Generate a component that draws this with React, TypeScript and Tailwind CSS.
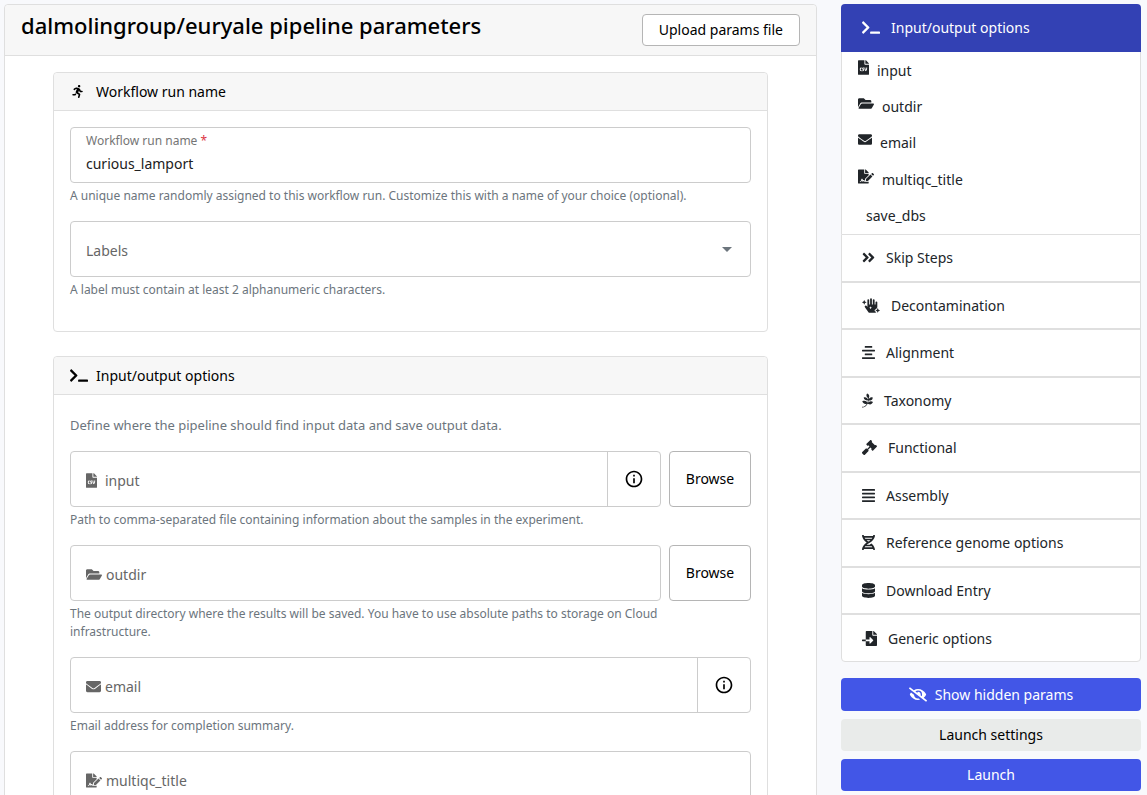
import type { ReactNode } from 'react'
import type { IconType } from 'react-icons'
import {
  FaAlignCenter,
  FaAlignJustify,
  FaAngleDoubleRight,
  FaDatabase,
  FaDna,
  FaEnvelope,
  FaEyeSlash,
  FaFileCsv,
  FaFileImport,
  FaFileSignature,
  FaFolderOpen,
  FaGavel,
  FaHandSparkles,
  FaPagelines,
  FaRunning,
  FaTerminal,
} from 'react-icons/fa'
import { MdArrowDropDown, MdInfoOutline } from 'react-icons/md'

type Item = { label: string; icon?: IconType; size?: string }

const params: Item[] = [
  { label: 'input', icon: FaFileCsv, size: 'w-[11px]' },
  { label: 'outdir', icon: FaFolderOpen, size: 'w-4' },
  { label: 'email', icon: FaEnvelope, size: 'w-[14px]' },
  { label: 'multiqc_title', icon: FaFileSignature, size: 'w-4' },
  { label: 'save_dbs' },
]

const sections: Item[] = [
  { label: 'Skip Steps', icon: FaAngleDoubleRight, size: 'w-[13px]' },
  { label: 'Decontamination', icon: FaHandSparkles, size: 'w-[18px]' },
  { label: 'Alignment', icon: FaAlignCenter, size: 'w-[13px]' },
  { label: 'Taxonomy', icon: FaPagelines, size: 'w-[11px]' },
  { label: 'Functional', icon: FaGavel, size: 'w-[15px]' },
  { label: 'Assembly', icon: FaAlignJustify, size: 'w-[13px]' },
  { label: 'Reference genome options', icon: FaDna, size: 'w-[13px]' },
  { label: 'Download Entry', icon: FaDatabase, size: 'w-[13px]' },
  { label: 'Generic options', icon: FaFileImport, size: 'w-[15px]' },
]

function Glyph({ icon: Icon, size = 'w-4' }: { icon: IconType; size?: string }) {
  return <Icon className={`h-[15px] shrink-0 ${size}`} aria-hidden="true" />
}

function Card({ title, icon, children }: { title: string; icon: ReactNode; children: ReactNode }) {
  return (
    <section className="rounded border border-[#dfdfdf] bg-white">
      <h2 className="flex h-[38px] items-center gap-2 rounded-t border-b border-[#dfdfdf] bg-[#f7f7f7] px-4 text-[14px] font-normal text-black">
        <span className="flex w-[18px]">{icon}</span>
        {title}
      </h2>
      {children}
    </section>
  )
}

function Hint({ id, children }: { id: string; children: ReactNode }) {
  return (
    <p id={id} className="mt-1 text-[12px] leading-[18px] text-[#6c757d]">
      {children}
    </p>
  )
}

type FieldProps = { id: string; icon: IconType; size: string; hint?: string; info?: boolean; browse?: boolean }

function Field({ id, icon, size, hint, info, browse }: FieldProps) {
  return (
    <div className="flex items-start gap-2">
      <div className="min-w-0 flex-1">
        <div className="flex h-14 rounded border border-[#cccccc]">
          <div className="flex min-w-0 flex-1 items-center pt-0.5 pl-[15px]">
            <label htmlFor={id} className="flex items-center gap-1 text-[14px] text-[#666666]">
              <Glyph icon={icon} size={size} />
              {id}
            </label>
            <input id={id} type="text" aria-describedby={hint ? `${id}-hint` : undefined} className="h-8 min-w-0 flex-1 bg-transparent px-2 text-[14px] outline-none" />
          </div>
          {info && (
            <button type="button" aria-label={`About ${id}`} className="flex w-[53px] items-center justify-center border-l border-[#cccccc] text-black">
              <MdInfoOutline className="size-5" />
            </button>
          )}
        </div>
        {hint && <Hint id={`${id}-hint`}>{hint}</Hint>}
      </div>
      {browse && (
        <button type="button" className="h-14 w-[82px] rounded border border-[#b5b5b5] bg-white pb-0.5 text-[14px] text-black">
          Browse
        </button>
      )}
    </div>
  )
}

export default function App() {
  return (
    <div className="flex h-screen items-start gap-6 overflow-hidden bg-[#f8f9fc] pt-1 pr-1.5 pl-1 font-['Noto_Sans',sans-serif]">
      <main className="min-w-0 flex-1 rounded border border-[#dfdfdf] bg-white">
        <header className="flex items-start justify-between rounded-t border-b border-[#dfdfdf] bg-[#f7f7f7] px-4 py-[9px]">
          <h1 className="text-[22px] leading-[22px] font-medium text-black">dalmolingroup/euryale pipeline parameters</h1>
          <button type="button" className="h-8 rounded border border-[#b5b5b5] bg-white px-4 pb-0.5 text-[14px] text-black">
            Upload params file
          </button>
        </header>

        <div className="flex flex-col gap-6 px-12 py-4">
          <Card title="Workflow run name" icon={<FaRunning className="ml-0.5 h-[13px] w-[11px]" aria-hidden="true" />}>
            <div className="flex flex-col gap-4 px-4 pt-4 pb-8">
              <div>
                <div className="flex h-14 flex-col rounded border border-[#cccccc] px-[15px] pt-1">
                  <label htmlFor="run-name" className="text-[12px] leading-[18px] text-[#757575]">
                    Workflow run name <span className="text-[#dc3545]">*</span>
                  </label>
                  <input id="run-name" type="text" defaultValue="curious_lamport" required aria-describedby="run-name-hint" className="h-[26px] bg-transparent text-[14px] text-[#212121] outline-none" />
                </div>
                <Hint id="run-name-hint">
                  A unique name randomly assigned to this workflow run. Customize this with a name of your choice (optional).
                </Hint>
              </div>
              <div>
                <div className="flex h-14 items-center rounded border border-[#cccccc] pr-[11px] pl-[15px]">
                  <label htmlFor="labels" className="pt-0.5 text-[14px] text-[#666666]">
                    Labels
                  </label>
                  <select id="labels" aria-describedby="labels-hint" className="h-8 min-w-0 flex-1 appearance-none bg-transparent outline-none" />
                  <MdArrowDropDown className="size-6 text-[#6c757d]" aria-hidden="true" />
                </div>
                <Hint id="labels-hint">A label must contain at least 2 alphanumeric characters.</Hint>
              </div>
            </div>
          </Card>

          <Card title="Input/output options" icon={<Glyph icon={FaTerminal} size="w-[18px]" />}>
            <div className="px-4 pt-5 pb-4">
              <p className="mb-4 text-[13px] leading-5 text-[#6c757d]">Define where the pipeline should find input data and save output data.</p>
              <div className="flex flex-col gap-4">
                <Field id="input" icon={FaFileCsv} size="w-[11px] mr-1" info browse hint="Path to comma-separated file containing information about the samples in the experiment." />
                <Field id="outdir" icon={FaFolderOpen} size="w-4" browse hint="The output directory where the results will be saved. You have to use absolute paths to storage on Cloud infrastructure." />
                <Field id="email" icon={FaEnvelope} size="w-[15px]" info hint="Email address for completion summary." />
                <Field id="multiqc_title" icon={FaFileSignature} size="w-4" />
              </div>
            </div>
          </Card>
        </div>
      </main>

      <aside className="w-[300px] shrink-0 text-[14px] text-[#212529]">
        <nav aria-label="Parameter groups">
          <a href="#io" className="flex h-12 items-center gap-[11px] rounded-t bg-[#3341b4] px-[21px] pb-0.5 text-white">
            <Glyph icon={FaTerminal} size="w-[18px]" />
            Input/output options
          </a>
          <ul className="grid h-[182px] grid-rows-5 border-x border-[#dfdfdf] bg-white px-4">
            {params.map(({ label, icon, size }) => (
              <li key={label} className="flex items-center">
                <a href={`#${label}`} className="flex items-start gap-2">
                  {icon ? <Glyph icon={icon} size={size} /> : <span />}
                  {label}
                </a>
              </li>
            ))}
          </ul>
          <ul className="grid h-[428px] grid-rows-[repeat(8,1fr)_46px] divide-y-2 divide-[#dfdfdf] rounded-b border border-[#dfdfdf] bg-white">
            {sections.map(({ label, icon, size }) => (
              <li key={label} className="flex">
                <a href={`#${label}`} className="flex flex-1 items-center gap-[11px] px-5">
                  {icon && <Glyph icon={icon} size={size} />}
                  {label}
                </a>
              </li>
            ))}
          </ul>
        </nav>
        <div className="mt-4 flex flex-col gap-2">
          <button type="button" className="flex h-[33px] items-center justify-center gap-2 rounded bg-[#4256e7] text-white">
            <Glyph icon={FaEyeSlash} size="w-[18px]" />
            Show hidden params
          </button>
          <button type="button" className="h-8 rounded bg-[#e9ebea] pb-0.5 text-black">
            Launch settings
          </button>
          <button type="button" className="h-8 rounded bg-[#4256e7] pb-0.5 text-white">
            Launch
          </button>
        </div>
      </aside>
    </div>
  )
}
